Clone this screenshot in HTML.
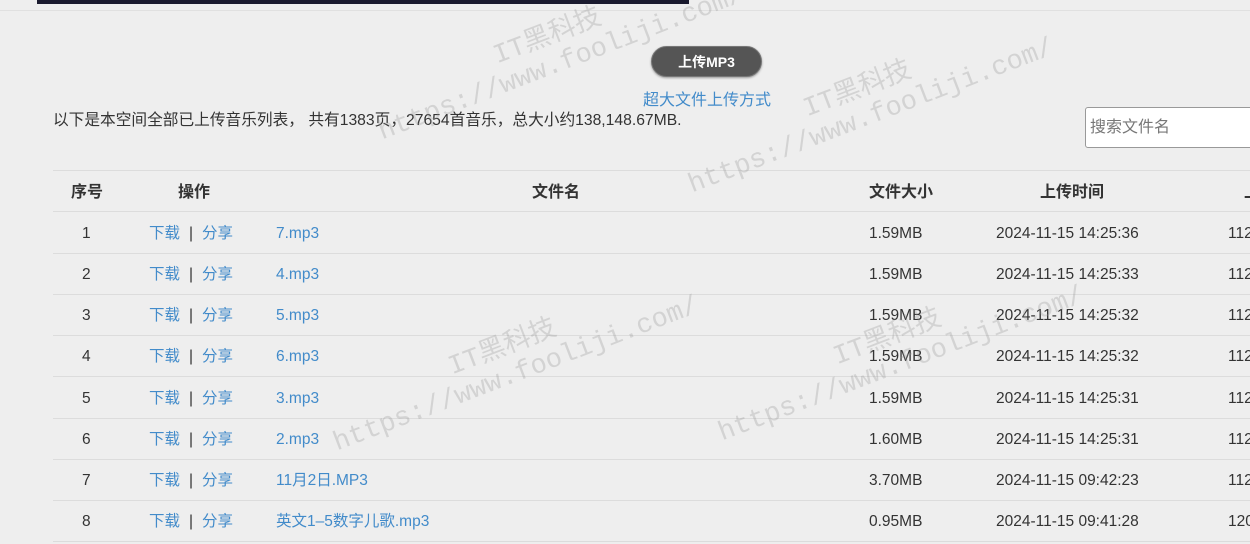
<!DOCTYPE html>
<html><head><meta charset="utf-8"><style>
body{margin:0;width:1250px;height:544px;overflow:hidden;background:#eeeeee;font-family:"Liberation Sans","Noto Sans CJK SC",sans-serif;color:#333;position:relative}
.a{position:absolute}
.topimg{left:37px;top:0;width:652px;height:4px;background:#1a1a2e}
.hr{left:0;top:10px;width:1250px;height:1px;background:#e0e0e0}
.btn{left:651px;top:46px;width:111px;height:31px;border-radius:16px;background:#555;border:1px solid #777;box-shadow:0 1px 2px #999;color:#fff;font-weight:bold;font-size:14px;text-align:center;line-height:31px;box-sizing:border-box}
.big{left:643px;top:86px;font-size:16px;color:#428bca}
.info{left:53px;top:107px;font-size:15.7px;color:#333}
.search{left:1085px;top:107px;width:180px;height:41px;background:#fff;border:1px solid #999;border-radius:3px;box-sizing:border-box;font-size:16px;color:#777;line-height:39px;padding-left:4px}
.line{left:53px;width:1197px;height:1px;background:#dcdcdc}
.row{left:0;width:1250px;height:41px;font-size:15.5px;line-height:43px}
.row span{position:absolute;white-space:nowrap}
.l{color:#428bca}
.th span{font-weight:bold;font-size:16px}
.wm{position:absolute;font-family:"Liberation Mono","Noto Sans CJK SC",monospace;font-size:27px;color:rgba(150,150,150,.3);white-space:nowrap;transform:rotate(-21deg);transform-origin:0 100%;line-height:1}
</style></head><body>
<div class="a topimg"></div>
<div class="a hr"></div>
<div class="a btn">上传MP3</div>
<div class="a big">超大文件上传方式</div>
<div class="a info">以下是本空间全部已上传音乐列表， 共有1383页，27654首音乐，总大小约138,148.67MB.</div>
<div class="a search">搜索文件名</div>
<div class="a line" style="top:170px"></div>
<div class="a row th" style="top:171px"><span style="left:71px">序号</span><span style="left:178px">操作</span><span style="left:532px">文件名</span><span style="left:869px">文件大小</span><span style="left:1040px">上传时间</span><span style="left:1244px">上</span></div>
<div class="a line" style="top:211px"></div>
<div class="a row" style="top:212px"><span style="left:82px">1</span><span style="left:149px" class="l">下载</span><span style="left:189px">|</span><span style="left:202px" class="l">分享</span><span style="left:276px" class="l">7.mp3</span><span style="left:869px">1.59MB</span><span style="left:996px">2024-11-15 14:25:36</span><span style="left:1228px">112</span></div>
<div class="a line" style="top:253px"></div>
<div class="a row" style="top:253px"><span style="left:82px">2</span><span style="left:149px" class="l">下载</span><span style="left:189px">|</span><span style="left:202px" class="l">分享</span><span style="left:276px" class="l">4.mp3</span><span style="left:869px">1.59MB</span><span style="left:996px">2024-11-15 14:25:33</span><span style="left:1228px">112</span></div>
<div class="a line" style="top:294px"></div>
<div class="a row" style="top:294px"><span style="left:82px">3</span><span style="left:149px" class="l">下载</span><span style="left:189px">|</span><span style="left:202px" class="l">分享</span><span style="left:276px" class="l">5.mp3</span><span style="left:869px">1.59MB</span><span style="left:996px">2024-11-15 14:25:32</span><span style="left:1228px">112</span></div>
<div class="a line" style="top:335px"></div>
<div class="a row" style="top:335px"><span style="left:82px">4</span><span style="left:149px" class="l">下载</span><span style="left:189px">|</span><span style="left:202px" class="l">分享</span><span style="left:276px" class="l">6.mp3</span><span style="left:869px">1.59MB</span><span style="left:996px">2024-11-15 14:25:32</span><span style="left:1228px">112</span></div>
<div class="a line" style="top:376px"></div>
<div class="a row" style="top:377px"><span style="left:82px">5</span><span style="left:149px" class="l">下载</span><span style="left:189px">|</span><span style="left:202px" class="l">分享</span><span style="left:276px" class="l">3.mp3</span><span style="left:869px">1.59MB</span><span style="left:996px">2024-11-15 14:25:31</span><span style="left:1228px">112</span></div>
<div class="a line" style="top:418px"></div>
<div class="a row" style="top:418px"><span style="left:82px">6</span><span style="left:149px" class="l">下载</span><span style="left:189px">|</span><span style="left:202px" class="l">分享</span><span style="left:276px" class="l">2.mp3</span><span style="left:869px">1.60MB</span><span style="left:996px">2024-11-15 14:25:31</span><span style="left:1228px">112</span></div>
<div class="a line" style="top:459px"></div>
<div class="a row" style="top:459px"><span style="left:82px">7</span><span style="left:149px" class="l">下载</span><span style="left:189px">|</span><span style="left:202px" class="l">分享</span><span style="left:276px" class="l">11月2日.MP3</span><span style="left:869px">3.70MB</span><span style="left:996px">2024-11-15 09:42:23</span><span style="left:1228px">112</span></div>
<div class="a line" style="top:500px"></div>
<div class="a row" style="top:500px"><span style="left:82px">8</span><span style="left:149px" class="l">下载</span><span style="left:189px">|</span><span style="left:202px" class="l">分享</span><span style="left:276px" class="l">英文1–5数字儿歌.mp3</span><span style="left:869px">0.95MB</span><span style="left:996px">2024-11-15 09:41:28</span><span style="left:1228px">120</span></div>
<div class="a line" style="top:541px"></div>

<div class="wm" style="left:500px;top:44px">IT黑科技</div>
<div class="wm" style="left:385px;top:120px">https://www.fooliji.com/</div>
<div class="wm" style="left:810px;top:97px">IT黑科技</div>
<div class="wm" style="left:695px;top:173px">https://www.fooliji.com/</div>
<div class="wm" style="left:455px;top:355px">IT黑科技</div>
<div class="wm" style="left:340px;top:431px">https://www.fooliji.com/</div>
<div class="wm" style="left:840px;top:345px">IT黑科技</div>
<div class="wm" style="left:725px;top:421px">https://www.fooliji.com/</div>
</body></html>
